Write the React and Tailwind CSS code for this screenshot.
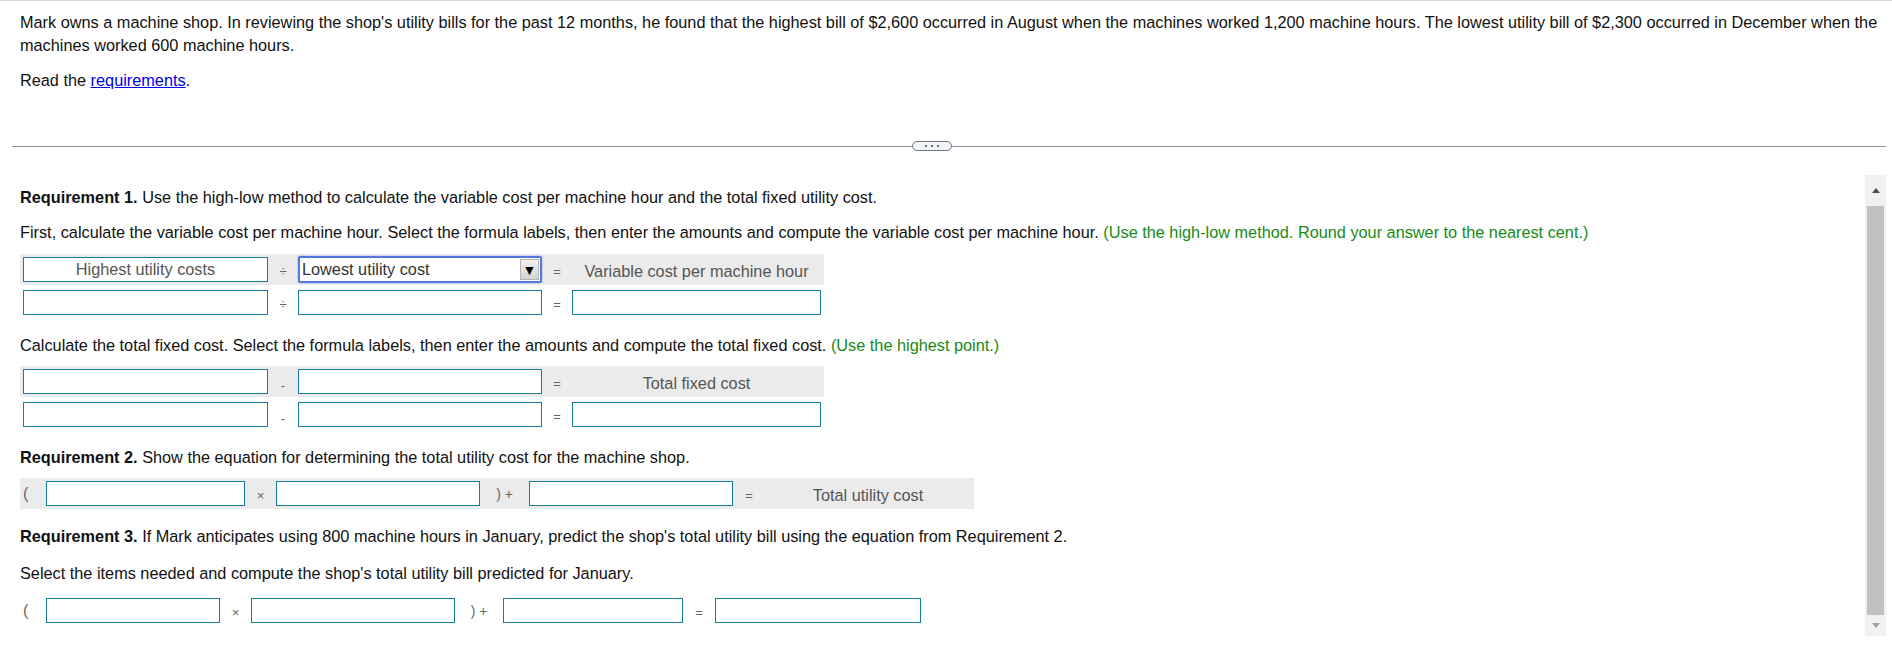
const Box = ({ className = '' }) => (
  <div className={`h-[25px] shrink-0 border border-[#177d9c] bg-white ${className}`} />
);

const Op = ({ children, className = '' }) => (
  <span className={`shrink-0 text-center text-[13px] text-[#666] ${className}`}>{children}</span>
);

const Label = ({ children, className = '' }) => (
  <span className={`shrink-0 text-center text-[16.3px] text-[#555] pt-[3px] ${className}`}>{children}</span>
);

function Scrollbar() {
  return (
    <div className="mr-[6px] flex h-[461px] w-[21px] shrink-0 flex-col items-center bg-[#f1f1f1]">
      <div className="flex h-[31px] items-center justify-center">
        <div className="h-0 w-0 border-x-[4px] border-b-[5px] border-x-transparent border-b-[#505050]" />
      </div>
      <div className="h-[409px] w-[17px] bg-[#c1c1c1]" />
      <div className="flex flex-1 items-center justify-center">
        <div className="h-0 w-0 border-x-[4px] border-t-[5px] border-x-transparent border-t-[#a3a3a3]" />
      </div>
    </div>
  );
}

export default function App() {
  return (
    <div className="h-[648px] w-[1892px] overflow-hidden border-t border-[#cfd5df] bg-white font-['Liberation_Sans',Arial,sans-serif] text-[16.3px] leading-[23px] text-[#111]">
      <div className="pl-[20px] pr-[6px] pt-[10px]">
        <p>
          Mark owns a machine shop. In reviewing the shop's utility bills for the past 12 months, he found that the highest bill of $2,600 occurred in August when the machines worked 1,200 machine hours. The lowest utility bill of $2,300 occurred in December when the machines worked 600 machine hours.
        </p>
        <p className="mt-[12px]">
          Read the <span className="text-[#0000ee] underline">requirements</span>.
        </p>
      </div>

      <div className="mt-[49px] flex h-[10px] items-center pl-[12px] pr-[6px]">
        <div className="h-px w-[900px] bg-[#8a93a3]" />
        <div className="flex h-[10px] w-[40px] items-center justify-center gap-[4px] rounded-full border border-[#6f7888] bg-[#f3f4f6]">
          <span className="h-[2px] w-[2px] rounded-full bg-[#3d4452]" />
          <span className="h-[2px] w-[2px] rounded-full bg-[#3d4452]" />
          <span className="h-[2px] w-[2px] rounded-full bg-[#3d4452]" />
        </div>
        <div className="h-px flex-1 bg-[#8a93a3]" />
      </div>

      <div className="mt-[24px] flex">
        <div className="min-w-0 flex-1 pl-[20px] pt-[11px]">
          <p>
            <b>Requirement 1.</b> Use the high-low method to calculate the variable cost per machine hour and the total fixed utility cost.
          </p>
          <p className="mt-[12px]">
            First, calculate the variable cost per machine hour. Select the formula labels, then enter the amounts and compute the variable cost per machine hour.{' '}
            <span className="text-[#178a17]">(Use the high-low method. Round your answer to the nearest cent.)</span>
          </p>

          <div className="mt-[10px] flex h-[31px] w-fit items-center bg-[#ebebeb] px-[3px]">
            <div className="flex h-[25px] w-[245px] shrink-0 items-center justify-center border border-[#177d9c] bg-white text-[#555]">
              Highest utility costs
            </div>
            <Op className="w-[30px] pt-[3px]">÷</Op>
            <div className="flex h-[27px] w-[244px] shrink-0 items-center justify-between rounded-[2px] border-2 border-[#5578de] bg-white pl-[2px] pr-[1px] text-[#333] shadow-[0_0_2px_#8fa6ea]">
              <span>Lowest utility cost</span>
              <span className="flex h-[21px] w-[19px] items-center justify-center border border-[#b5b5b5] bg-gradient-to-b from-[#f2f2f2] to-[#d4d4d4] text-[14px] leading-none text-black">
                ▼
              </span>
            </div>
            <Op className="w-[30px] pt-[3px]">=</Op>
            <Label className="w-[249px]">Variable cost per machine hour</Label>
          </div>
          <div className="mt-[2px] flex h-[31px] items-center px-[3px]">
            <Box className="w-[245px]" />
            <Op className="w-[30px] pt-[3px]">÷</Op>
            <Box className="w-[244px]" />
            <Op className="w-[30px] pt-[3px]">=</Op>
            <Box className="w-[249px]" />
          </div>

          <p className="mt-[16px]">
            Calculate the total fixed cost. Select the formula labels, then enter the amounts and compute the total fixed cost.{' '}
            <span className="text-[#178a17]">(Use the highest point.)</span>
          </p>

          <div className="mt-[9px] flex h-[31px] w-fit items-center bg-[#ebebeb] px-[3px]">
            <Box className="w-[245px]" />
            <Op className="w-[30px] pt-[8px]">-</Op>
            <Box className="w-[244px]" />
            <Op className="w-[30px] pt-[3px]">=</Op>
            <Label className="w-[249px]">Total fixed cost</Label>
          </div>
          <div className="mt-[2px] flex h-[31px] items-center px-[3px]">
            <Box className="w-[245px]" />
            <Op className="w-[30px] pt-[8px]">-</Op>
            <Box className="w-[244px]" />
            <Op className="w-[30px] pt-[3px]">=</Op>
            <Box className="w-[249px]" />
          </div>

          <p className="mt-[16px]">
            <b>Requirement 2.</b> Show the equation for determining the total utility cost for the machine shop.
          </p>
          <div className="mt-[9px] flex h-[31px] w-fit items-center bg-[#ebebeb] px-[3px]">
            <Op className="w-[23px] text-left text-[16px]">(</Op>
            <Box className="w-[199px]" />
            <Op className="w-[31px] pt-[3px]">×</Op>
            <Box className="w-[204px]" />
            <Op className="w-[49px] pt-[2px] text-[14px]">)&nbsp;+</Op>
            <Box className="w-[204px]" />
            <Op className="w-[32px] pt-[3px]">=</Op>
            <Label className="w-[206px]">Total utility cost</Label>
          </div>

          <p className="mt-[16px]">
            <b>Requirement 3.</b> If Mark anticipates using 800 machine hours in January, predict the shop's total utility bill using the equation from Requirement 2.
          </p>
          <p className="mt-[14px]">Select the items needed and compute the shop's total utility bill predicted for January.</p>
          <div className="mt-[10px] flex h-[31px] items-center px-[3px]">
            <Op className="w-[23px] text-left text-[16px]">(</Op>
            <Box className="w-[174px]" />
            <Op className="w-[31px] pt-[3px]">×</Op>
            <Box className="w-[204px]" />
            <Op className="w-[48px] pt-[2px] text-[14px]">)&nbsp;+</Op>
            <Box className="w-[180px]" />
            <Op className="w-[32px] pt-[3px]">=</Op>
            <Box className="w-[206px]" />
          </div>
        </div>
        <Scrollbar />
      </div>
    </div>
  );
}
